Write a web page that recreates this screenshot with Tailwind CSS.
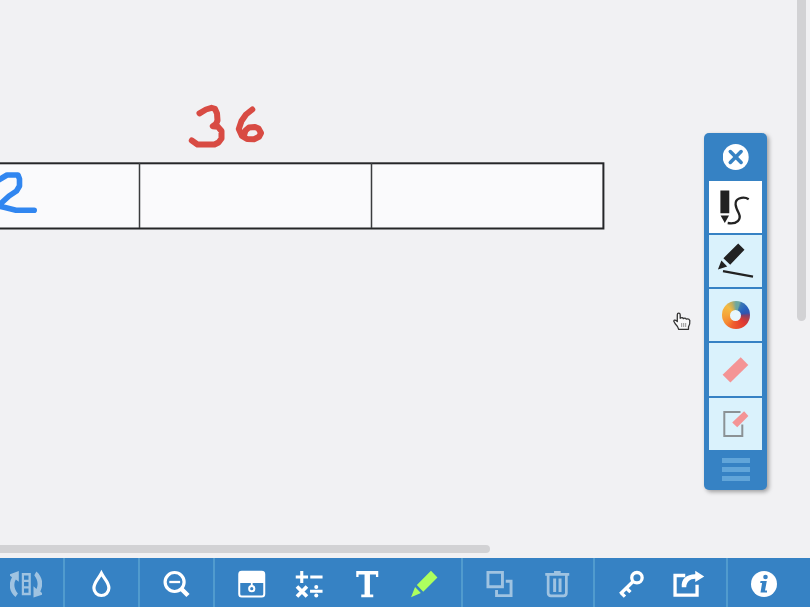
<!DOCTYPE html>
<html lang="en">
<head>
<meta charset="utf-8">
<title>Number Bars</title>
<script src="https://cdn.jsdelivr.net/npm/@tailwindcss/browser@4"></script>
</head>
<body class="w-[810px] h-[607px] overflow-hidden bg-[#f1f1f3] flex flex-col font-['Liberation_Sans',sans-serif]">
<main class="relative h-[558px] shrink-0 overflow-hidden">
  <!-- whiteboard -->
  <svg class="block w-[810px] h-[558px]" viewBox="0 0 810 558" fill="none">
    <rect x="-10" y="163.3" width="613.4" height="65.2" fill="#fafafc" stroke="#252628" stroke-width="2"/>
    <path d="M139.5 163v65M371.5 163v65" stroke="#3b3c3e" stroke-width="1.5"/>
    <g stroke="#d84b43" stroke-width="6" stroke-linecap="round" stroke-linejoin="round">
      <path d="M199.500 113.300L206 109.500L211.500 107.800L215 108.800L217 113.500L217.500 120.500L216 124L212.800 126.300L218 126.800L221.500 131V138.500L218.500 142.500L214.500 144.500H197.500L191.800 140.500"/>
      <path d="M252.300 109.500L246 114.500L241.500 121L238.800 129L242 136L247 139L254 139.300L259 136.800L261 133L258.500 128.500L255 126.900L249 127.500L245.500 130.500L244 135.500"/>
    </g>
    <path d="M-4 181.500L2 178L7 175H18L19.500 179V186L16.500 191L9 196L-2 206L5 207.500L16 210.200H34.200" stroke="#3186f0" stroke-width="5.600" stroke-linecap="round" stroke-linejoin="round"/>
  </svg>

  <!-- scrollbars -->
  <div class="absolute left-[797px] -top-2 w-[8.500px] h-[329px] rounded-full bg-[#d2d2d4]"></div>
  <div class="absolute -left-2 top-[544.800px] w-[498.300px] h-[8.700px] rounded-full bg-[#d2d2d4]"></div>

  <!-- drawing tools -->
  <aside class="absolute left-[704.300px] top-[132.500px] w-[63.200px] h-[357px] px-[5.200px] rounded-[5px] bg-[#3682c4] shadow-[2px_2px_4px_rgba(0,0,0,0.35)] flex flex-col">
    <button class="h-[48px] shrink-0 flex items-center justify-center" aria-label="Close">
      <svg class="w-[26px] h-[26px]" viewBox="0 0 26 26"><circle cx="12.700" cy="13" r="13" fill="#fff"/><path d="M7.300 7.600l10.800 10.800M18.100 7.600L7.300 18.400" stroke="#3682c4" stroke-width="3.600" stroke-linecap="round"/></svg>
    </button>
    <div class="flex flex-col gap-[2px]">
      <button class="h-[52.300px] bg-white" aria-label="Freehand">
        <svg class="block w-[52px] h-[52px]" viewBox="709.300 181 52 52"><path d="M720.700 190.400h8.900v22.800h-8.900zM720.900 215.600h8.400l-4.200 7.500z" fill="#222"/><path d="M728 223C737.500 224.500 741.800 219.500 739.200 213.500C736 207.500 733.500 201 739.500 198.500C743 197 746 197.200 749 199.200" fill="none" stroke="#222" stroke-width="2.300"/></svg>
      </button>
      <button class="h-[52.300px] bg-[#daf2fc]" aria-label="Straight line">
        <svg class="block w-[52px] h-[52px]" viewBox="709.300 235.300 52 52"><path d="M738.500 243.700l6.300 6.300-14.300 15-6.800-6.500zM721.700 260.800l5.800 6-9.300 3z" fill="#222"/><path d="M723.300 271.500l30 5.500" stroke="#222" stroke-width="2.200"/></svg>
      </button>
      <button class="h-[52.300px] bg-[#daf2fc] flex items-center justify-center" aria-label="Colour">
        <span class="w-[28.500px] h-[28.500px] rounded-full flex items-center justify-center bg-[conic-gradient(#6da7a0_0deg_15deg,#3b78b4_25deg,#2862bd_55deg,#3054ae_80deg,#80406c_92deg,#b13e48_110deg,#dc3833_130deg,#e94a2c_165deg,#ef602d_200deg,#f58a32_230deg,#f5a63a_270deg,#f4ba43_315deg,#c1ae60_340deg,#6da7a0)]"><span class="w-[11px] h-[11px] rounded-full bg-[#e7f7fd]"></span></span>
      </button>
      <button class="h-[52.300px] bg-[#daf2fc]" aria-label="Eraser">
        <svg class="block w-[52px] h-[52px]" viewBox="709.500 344 52 52"><path d="M741.200 357.300l7.600 7.700-17.900 17.600-7.800-7.800z" fill="#f49495"/></svg>
      </button>
      <button class="h-[52.300px] bg-[#daf2fc]" aria-label="Clear drawing">
        <svg class="block w-[52px] h-[52px]" viewBox="709.500 398.300 52 52"><path d="M741 412.200h-16.200v24.200h18v-11.500" fill="none" stroke="#8b9295" stroke-width="2"/><path d="M744.600 411.600l4.300 4.700-11.200 11.300-5-4.900z" fill="#f49495"/></svg>
      </button>
    </div>
    <div class="flex-1 flex flex-col items-center pt-[8.500px] gap-[4.600px]">
      <i class="w-[28.500px] h-[4.300px] bg-[#61a5d9]"></i><i class="w-[28.500px] h-[4.300px] bg-[#61a5d9]"></i><i class="w-[28.500px] h-[4.300px] bg-[#61a5d9]"></i>
    </div>
  </aside>

  <!-- hand cursor -->
  <svg class="absolute left-[670px] top-[310px] w-6 h-6" viewBox="670 310 24 24"><path d="M677.300 321.500v-6.800q0-1.600 1.400-1.600t1.500 1.600v3.600q2.200-1.300 3.100.3 2-1.200 3 .5 2.500-1 3.500 1.300.4 4-1.300 6.400v2.500h-9.800q-.5-2.500-3.500-5.500l-1.400-2.600q.3-1.700 2-.9z" fill="#f9f9f9" stroke="#333" stroke-width="1.300" stroke-linejoin="round"/><path d="M681.700 323v4M683.700 323v4M685.700 323v4" stroke="#777" stroke-width=".8"/></svg>
</main>

<nav class="flex h-[49px] shrink-0 bg-[#3682c4] text-white">
  <div class="w-[65px] pr-[11px] border-r-2 border-[#519bce] flex justify-center">
    <svg class="w-8 h-[49px]" viewBox="10 558 32 49" fill="#9fc3e1"><path fill-rule="evenodd" d="M21.800 573h9v22.200h-9zM24 575.500v4.200h4.500v-4.200zM24 582v4.200h4.500V582zM24 588.500v4.200h4.500v-4.200z"/><path d="M8.800 574.800l10-3.800v10.700l-3-2.200c-2.500 4.200-1.800 9.500 2.100 14.100l-2.400 3.400c-6.300-5.500-7.300-12.700-3.500-19.700zM43.500 594.200l-10 3.200v-11.200l3 2.700c2-4.500 1.200-9.100-2.200-13.600l2.100-3.900c6 5.200 7.500 12.800 3.900 20z"/></svg>
  </div>
  <div class="w-[75px] border-r-2 border-[#519bce] flex justify-center">
    <svg class="w-8 h-[49px]" viewBox="85.800 558 32 49"><path d="M101.200 573.300c-2.700 5.300-7.500 9.100-7.500 14.700a7.500 7.500 0 0015 0c0-5.600-4.800-9.400-7.500-14.700z" fill="none" stroke="#fff" stroke-width="3.200"/></svg>
  </div>
  <div class="w-[75px] border-r-2 border-[#519bce] flex justify-center">
    <svg class="w-8 h-[49px]" viewBox="160.700 558 32 49" fill="none" stroke="#fff"><circle cx="174.300" cy="582" r="9.500" stroke-width="3.200"/><path d="M169 582h10.800" stroke-width="2.300"/><path d="M180.700 588.500l7 7" stroke-width="4.500"/></svg>
  </div>
  <div class="w-[248px] px-2 border-r-2 border-[#519bce] flex">
    <button class="flex-1 flex justify-center" aria-label="Cover"><svg class="w-8 h-[49px]" viewBox="235.750 558 32 49" fill="none" stroke="#fff"><rect x="239" y="571.700" width="25" height="24.700" rx="2.500" stroke-width="2"/><path d="M239 571.700h25V583h-25z" fill="#fff" stroke="none"/><path d="M251.500 583v3" stroke-width="1.800"/><circle cx="251.500" cy="588.700" r="2.600" stroke-width="2"/></svg></button>
    <button class="flex-1 flex justify-center" aria-label="Math"><svg class="w-8 h-[49px]" viewBox="293.250 558 32 49" fill="none" stroke="#fff"><path d="M296 577h12.300M302 571v12M310.500 577h12.300M310.300 591.300h12.500" stroke-width="3.100"/><path d="M297.200 586.500l10 10M307.200 586.500l-10 10" stroke-width="3.700"/><circle cx="316.500" cy="587" r="2" fill="#fff" stroke="none"/><circle cx="316.500" cy="595.500" r="2" fill="#fff" stroke="none"/></svg></button>
    <button class="flex-1 flex justify-center" aria-label="Text"><svg class="w-8 h-[49px]" viewBox="350.750 558 32 49" fill="#fff"><path d="M356 571h22v6h-2.300v-2.400h-6v19.900h3.300v2.700h-12v-2.700h3.300v-19.900h-6v2.400H356z"/></svg></button>
    <button class="flex-1 flex justify-center" aria-label="Draw"><svg class="w-8 h-[49px]" viewBox="408.250 558 32 49" fill="#adff5e"><path d="M431.200 570.800l6.500 6.700-14.200 14.200-6.400-6.700zM415.300 587l5.800 6-9.800 4.200z"/></svg></button>
  </div>
  <div class="w-[132px] px-[7.500px] border-r-2 border-[#519bce] flex">
    <button class="flex-1 flex justify-center" aria-label="Duplicate"><svg class="w-8 h-[49px]" viewBox="483.250 558 32 49" fill="none" stroke="#9fc3e1" stroke-width="2.900"><path d="M488.200 572.400h14.500v14.300h-14.500zM506 581.300h5.300v14.300h-14.500v-5.500"/></svg></button>
    <button class="flex-1 flex justify-center" aria-label="Delete"><svg class="w-8 h-[49px]" viewBox="540.750 558 32 49" fill="none" stroke="#9fc3e1"><path d="M545 574.300h24M553.800 572.300h6.600" stroke-width="2.700"/><path d="M547.900 575v18q0 2.800 2.800 2.800h12.600q2.800 0 2.800-2.800v-18" stroke-width="2.700"/><path d="M554.400 578.500v13.500M559.800 578.500v13.500" stroke-width="3"/></svg></button>
  </div>
  <div class="w-[133px] px-2 border-r-2 border-[#519bce] flex">
    <button class="flex-1 flex justify-center" aria-label="Share code"><svg class="w-8 h-[49px]" viewBox="615.750 558 32 49" fill="none" stroke="#fff" stroke-width="3.300"><circle cx="636.700" cy="577.700" r="5.200"/><path d="M632.800 581.500l-12.800 12.500M620.900 592.800l3.800 3.900M626 588l4.200 4.200"/></svg></button>
    <button class="flex-1 flex justify-center" aria-label="Share"><svg class="w-8 h-[49px]" viewBox="673.250 558 32 49"><path d="M685.500 575.500h-10.200v19.700h22v-10.500" fill="none" stroke="#fff" stroke-width="3.300"/><path d="M682 587.300c-.8-8 4.500-13 13.500-13v-3.500l9 5.600-9 5.600v-3.300c-5.300 0-8.800 3-9 8.600z" fill="#fff"/></svg></button>
  </div>
  <div class="w-[82px] pr-[10px] flex justify-center">
    <svg class="w-8 h-[49px]" viewBox="748 558 32 49"><circle cx="764" cy="584" r="13" fill="#fff"/><circle cx="765.500" cy="577" r="2.300" fill="#3682c4"/><path d="M760.500 581h6.300l-1.800 9.500h2v1.900h-6.500l1.600-9.500h-1.900z" fill="#3682c4"/></svg>
  </div>
</nav>
</body>
</html>
